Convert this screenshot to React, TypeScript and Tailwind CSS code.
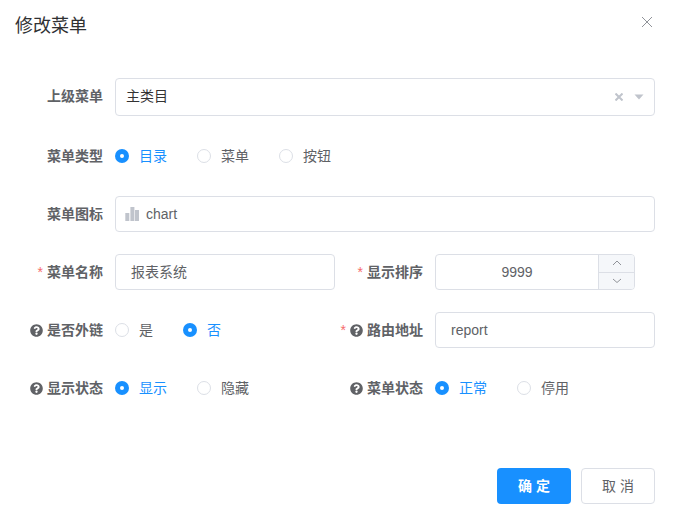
import type { ReactNode } from "react";
import { FaQuestionCircle } from "react-icons/fa";

const Hint = () => <FaQuestionCircle className="mr-[4px] text-[13px] text-[#606266]" />;
const Star = () => <span className="mr-[4px] font-normal text-[#f56c6c]">*</span>;

function Label({ required, hint, children }: { required?: boolean; hint?: boolean; children: ReactNode }) {
  return (
    <label className="flex h-9 w-[100px] shrink-0 items-center justify-end pr-3 text-sm font-bold text-[#606266]">
      {required && <Star />}
      {hint && <Hint />}
      {children}
    </label>
  );
}

function Radios({ options, active }: { options: string[]; active: number }) {
  return (
    <div className="flex h-9 items-center gap-[30px] text-sm">
      {options.map((o, i) => (
        <div key={o} className="flex items-center gap-[10px]">
          {i === active ? (
            <span className="flex h-[14px] w-[14px] items-center justify-center rounded-full bg-[#1890ff]">
              <span className="h-1 w-1 rounded-full bg-white" />
            </span>
          ) : (
            <span className="h-[14px] w-[14px] rounded-full border border-[#dcdfe6] bg-white" />
          )}
          <span className={i === active ? "text-[#1890ff]" : "text-[#606266]"}>{o}</span>
        </div>
      ))}
    </div>
  );
}

const inputBox = "flex h-9 items-center rounded border border-[#dcdfe6] bg-white text-sm text-[#606266]";

export default function App() {
  return (
    <div className="h-[520px] w-[673px] overflow-hidden bg-white font-['Liberation_Sans','Noto_Sans_CJK_SC',sans-serif]">
      {/* Header */}
      <div className="flex h-[78px] items-start justify-between pl-[15px] pr-5 pt-[15px]">
        <span className="text-lg leading-[22px] text-[#303133]">修改菜单</span>
        <svg className="mt-[1px]" width="12" height="12" viewBox="0 0 12 12" fill="none" stroke="#909399" strokeWidth="1">
          <path d="M1 1l10 10M11 1L1 11" />
        </svg>
      </div>

      <div className="flex flex-col gap-[22px] pl-[15px] pr-[18px]">
        <div className="flex">
          <Label>
            <span className="-mt-[1px]">上级菜单</span>
          </Label>
          <div className="flex h-[38px] flex-1 items-center justify-between rounded border border-[#dcdfe6] pl-[10px] pr-[10px] text-sm text-[#333333]">
            <span className="pb-[2px]">主类目</span>
            <div className="flex items-center gap-[11px]">
              <svg width="8" height="8" viewBox="0 0 8 8" fill="none" stroke="#c0c4cc" strokeWidth="2">
                <path d="M0.5 0.5l7 7M7.5 0.5l-7 7" />
              </svg>
              <svg width="10" height="6" viewBox="0 0 10 6" fill="#c0c4cc">
                <path d="M0.5 0.5h9L5 5.5z" />
              </svg>
            </div>
          </div>
        </div>

        <div className="flex">
          <Label>菜单类型</Label>
          <Radios options={["目录", "菜单", "按钮"]} active={0} />
        </div>

        <div className="flex">
          <Label>菜单图标</Label>
          <div className={`${inputBox} flex-1 gap-[7px] pl-[9px]`}>
            <svg width="14" height="14" viewBox="0 0 14 14" fill="#c0c4cc">
              <rect x="0.3" y="6" width="4" height="8" />
              <rect x="5.4" y="0" width="4" height="14" />
              <rect x="10" y="3" width="4" height="11" />
            </svg>
            <span>chart</span>
          </div>
        </div>

        <div className="grid grid-cols-2">
          <div className="flex">
            <Label required>菜单名称</Label>
            <div className={`${inputBox} flex-1 pl-[15px]`}>报表系统</div>
          </div>
          <div className="flex">
            <Label required>显示排序</Label>
            <div className={`${inputBox} w-[200px] overflow-hidden`}>
              <span className="flex-1 text-center">9999</span>
              <div className="flex h-full w-9 flex-col border-l border-[#dcdfe6] bg-[#f5f7fa]">
                <div className="flex flex-1 items-center justify-center border-b border-[#dcdfe6]">
                  <svg width="10" height="6" viewBox="0 0 10 6" fill="none" stroke="#909399" strokeWidth="1">
                    <path d="M1 5l4-4 4 4" />
                  </svg>
                </div>
                <div className="flex flex-1 items-center justify-center">
                  <svg width="10" height="5" viewBox="0 0 10 5" fill="none" stroke="#909399" strokeWidth="1">
                    <path d="M1 1l4 3.5L9 1" />
                  </svg>
                </div>
              </div>
            </div>
          </div>
        </div>

        <div className="grid grid-cols-2">
          <div className="flex">
            <Label hint>是否外链</Label>
            <Radios options={["是", "否"]} active={1} />
          </div>
          <div className="flex">
            <Label required hint>路由地址</Label>
            <div className={`${inputBox} flex-1 pl-[15px]`}>report</div>
          </div>
        </div>

        <div className="grid grid-cols-2">
          <div className="flex">
            <Label hint>显示状态</Label>
            <Radios options={["显示", "隐藏"]} active={0} />
          </div>
          <div className="flex">
            <Label hint>菜单状态</Label>
            <Radios options={["正常", "停用"]} active={0} />
          </div>
        </div>
      </div>

      {/* Footer */}
      <div className="mt-[62px] flex justify-end gap-[10px] pr-[18px]">
        <button className="h-9 w-[74px] whitespace-pre rounded bg-[#1890ff] text-sm font-bold text-white">确 定</button>
        <button className="h-9 w-[74px] whitespace-pre rounded border border-[#dcdfe6] bg-white text-sm text-[#606266]">取 消</button>
      </div>
    </div>
  );
}
